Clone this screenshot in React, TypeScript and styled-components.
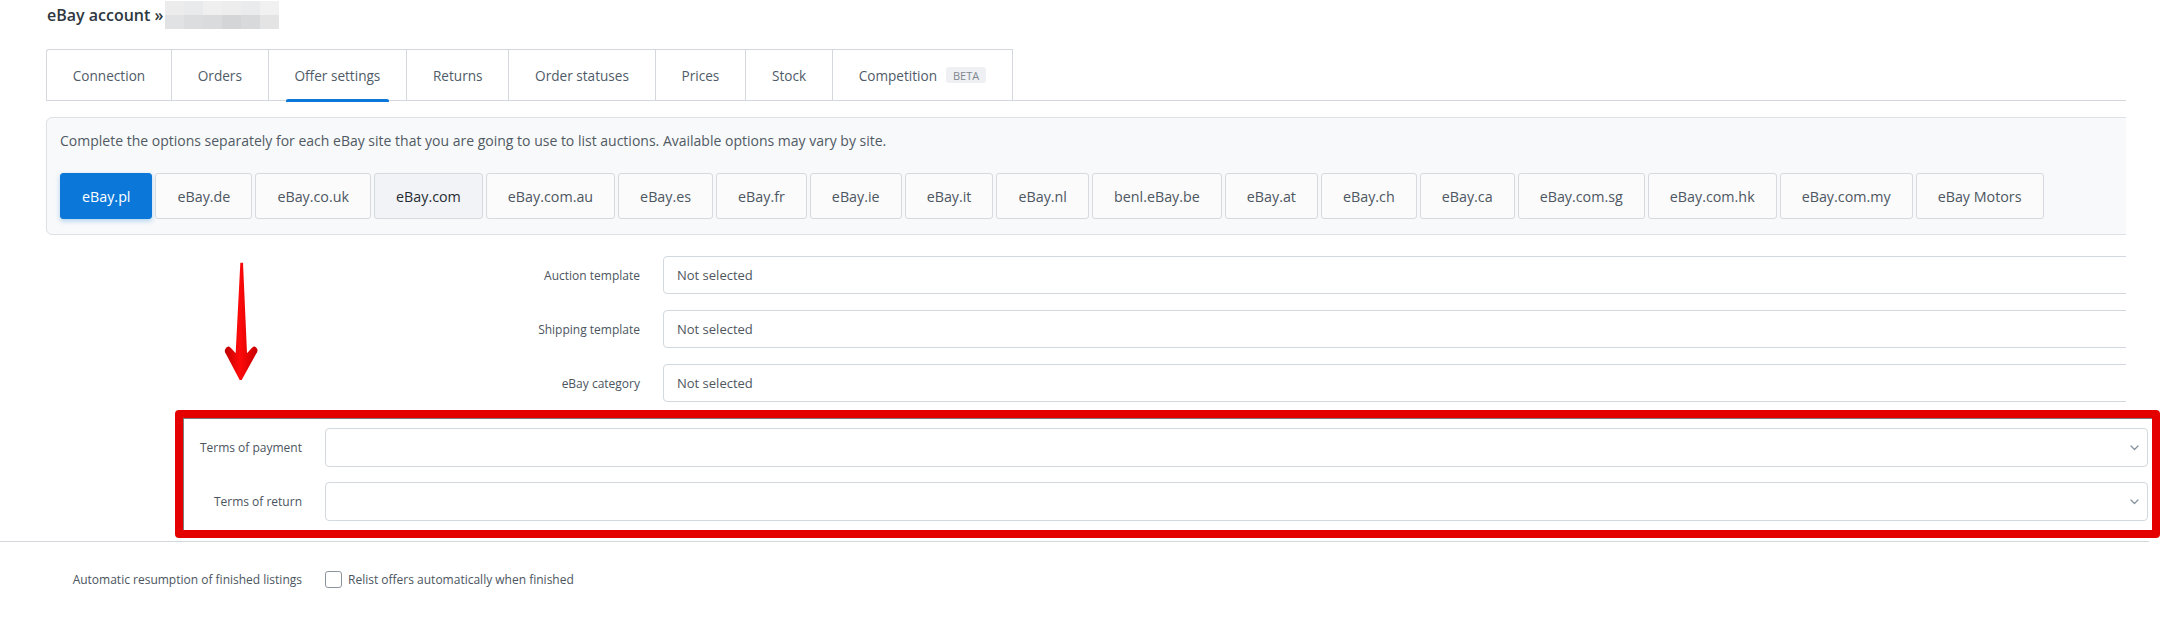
import React from "react";
import styled, { createGlobalStyle } from "styled-components";

const GlobalStyle = createGlobalStyle`
  html, body {
    margin: 0;
    padding: 0;
    background: #ffffff;
  }
  body {
    font-family: "Open Sans", "Liberation Sans", sans-serif;
    color: #4b5560;
  }
`;

const tabs = [
  "Connection",
  "Orders",
  "Offer settings",
  "Returns",
  "Order statuses",
  "Prices",
  "Stock",
  "Competition",
];

const sites = [
  "eBay.pl",
  "eBay.de",
  "eBay.co.uk",
  "eBay.com",
  "eBay.com.au",
  "eBay.es",
  "eBay.fr",
  "eBay.ie",
  "eBay.it",
  "eBay.nl",
  "benl.eBay.be",
  "eBay.at",
  "eBay.ch",
  "eBay.ca",
  "eBay.com.sg",
  "eBay.com.hk",
  "eBay.com.my",
  "eBay Motors",
];

// pixelated, blurred account name
const blurCells = [
  "#ececed", "#e9eaeb", "#efefef", "#ededee", "#eaebec", "#f1f1f1",
  "#e1e2e3", "#dcdddf", "#dadbdd", "#d4d5d7", "#d8d9da", "#e4e4e5",
];

export default function App() {
  return (
    <>
      <GlobalStyle />
      <Page>
        <Upper>
          <Header>
            <Title>eBay account »</Title>
            <Blur>
              {blurCells.map((c, i) => (
                <BlurCell key={i} $c={c} />
              ))}
            </Blur>
          </Header>

          <TabRow>
            {tabs.map((t) => (
              <Tab key={t} $active={t === "Offer settings"}>
                {t}
                {t === "Competition" && <Badge>BETA</Badge>}
              </Tab>
            ))}
          </TabRow>

          <Panel>
            <Info>
              Complete the options separately for each eBay site that you are
              going to use to list auctions. Available options may vary by site.
            </Info>
            <SiteRow>
              {sites.map((s) => (
                <SiteButton
                  key={s}
                  $active={s === "eBay.pl"}
                  $hover={s === "eBay.com"}
                >
                  {s}
                </SiteButton>
              ))}
            </SiteRow>
          </Panel>

          <Form>
            <Label>Auction template</Label>
            <Field>Not selected</Field>
            <Label>Shipping template</Label>
            <Field>Not selected</Field>
            <Label>eBay category</Label>
            <Field>Not selected</Field>
          </Form>
        </Upper>

        <RedBox>
          <Label>Terms of payment</Label>
          <Select>
            <Chevron />
          </Select>
          <Label>Terms of return</Label>
          <Select>
            <Chevron />
          </Select>
        </RedBox>

        <Divider />

        <CheckRow>
          <Label>Automatic resumption of finished listings</Label>
          <CheckLabel>
            <Box />
            Relist offers automatically when finished
          </CheckLabel>
        </CheckRow>

        <Arrow />
      </Page>
    </>
  );
}

function Chevron() {
  return (
    <svg width="9" height="6" viewBox="0 0 9 6">
      <path
        d="M1 1l3.5 3.5L8 1"
        fill="none"
        stroke="#8693a0"
        strokeWidth="1.3"
        strokeLinecap="round"
        strokeLinejoin="round"
      />
    </svg>
  );
}

function Arrow() {
  return (
    <ArrowWrap>
      <svg width="100" height="140" viewBox="0 0 300 420">
        <defs>
          <linearGradient id="arrowFill" x1="0" x2="1" y1="0" y2="0">
            <stop offset="0" stopColor="#c00000" />
            <stop offset="0.45" stopColor="#ff0a0a" />
            <stop offset="1" stopColor="#c80000" />
          </linearGradient>
        </defs>
        <path
          d="M121 38 L129 38 L141 310 L156 293 Q166 284 172 298 Q174 305 168 312 L125 390 L119 390 L78 312 Q72 305 76 297 Q82 284 92 293 L107 310 Z"
          fill="url(#arrowFill)"
        />
      </svg>
    </ArrowWrap>
  );
}

const Page = styled.div`
  position: relative;
  width: 2166px;
  height: 631px;
  overflow: hidden;
`;

const Upper = styled.div`
  padding-left: 46px;
  margin-right: 40px;
  overflow: hidden;
`;

const Header = styled.div`
  display: flex;
  align-items: center;
  height: 28px;
  padding-top: 1px;
  gap: 2px;
`;

const Title = styled.h1`
  margin: 0 0 0 1px;
  font-size: 16px;
  line-height: 28px;
  font-weight: 600;
  color: #2f3740;
`;

const Blur = styled.div`
  display: grid;
  grid-template-columns: repeat(6, 19px);
  grid-template-rows: 14px 14px;
  filter: blur(0.6px);
`;

const BlurCell = styled.div<{ $c: string }>`
  background: ${(p) => p.$c};
`;

const TabRow = styled.div`
  display: flex;
  margin-top: 20px;
  border-bottom: 1px solid #d4d8dd;
`;

const Tab = styled.div<{ $active?: boolean }>`
  position: relative;
  display: flex;
  align-items: center;
  height: 50px;
  padding: 0 25.8px;
  border-top: 1px solid #d4d8dd;
  border-left: 1px solid #d4d8dd;
  font-size: 13.6px;
  color: #4f5b68;
  white-space: nowrap;

  &:first-child {
    border-top-left-radius: 3px;
  }
  &:last-child {
    border-right: 1px solid #d4d8dd;
  }

  ${(p) =>
    p.$active &&
    `
    &::after {
      content: "";
      position: absolute;
      left: 17px;
      right: 17px;
      bottom: -2px;
      height: 3px;
      border-radius: 2px 2px 0 0;
      background: #0b78d9;
    }
  `}
`;

const Badge = styled.span`
  display: inline-flex;
  align-items: center;
  height: 16px;
  margin-left: 9px;
  padding: 0 7px;
  border-radius: 3px;
  background: #eef0f3;
  color: #80868e;
  font-size: 11px;
`;

const Panel = styled.div`
  margin-top: 16px;
  margin-right: -8px;
  padding: 13px 0 15px 13px;
  border: 1px solid #dde1e5;
  border-radius: 6px;
  background: #f8f9fa;
`;

const Info = styled.p`
  margin: 0;
  font-size: 14px;
  line-height: 20px;
  color: #505a64;
`;

const SiteRow = styled.div`
  display: flex;
  gap: 3px;
  margin-top: 22px;
`;

const SiteButton = styled.div<{ $active?: boolean; $hover?: boolean }>`
  display: flex;
  align-items: center;
  height: 46px;
  box-sizing: border-box;
  padding: 0 21px;
  border: 1px solid ${(p) => (p.$active ? "#0b78d9" : "#d6dade")};
  border-radius: 3px;
  background: ${(p) => (p.$active ? "#0b78d9" : p.$hover ? "#f1f3f6" : "#fbfbfc")};
  color: ${(p) => (p.$active ? "#ffffff" : p.$hover ? "#262b31" : "#4d5761")};
  box-shadow: ${(p) => (p.$active ? "0 2px 5px rgba(11, 120, 217, 0.3)" : "none")};
  font-size: 14.3px;
  white-space: nowrap;
`;

const Form = styled.div`
  display: grid;
  grid-template-columns: 594px 1fr;
  column-gap: 23px;
  row-gap: 16px;
  margin-top: 21px;
  margin-right: -8px;
`;

const Label = styled.div`
  align-self: center;
  text-align: right;
  font-size: 12px;
  color: #4b5560;
  white-space: nowrap;
`;

const Field = styled.div`
  display: flex;
  align-items: center;
  height: 38px;
  box-sizing: border-box;
  padding: 0 13px;
  border: 1px solid #d3d9df;
  border-radius: 4px;
  background: #ffffff;
  font-size: 13px;
  color: #4f565e;
`;

const RedBox = styled.div`
  display: grid;
  grid-template-columns: 119px 1fr;
  column-gap: 23px;
  row-gap: 15px;
  margin: 8px 6px 0 175px;
  padding: 10px 4px 9px 0;
  border: 8px solid #e50000;
  border-radius: 4px;
  box-shadow: inset 1px 1px 0 rgba(70, 70, 70, 0.7);
`;

const Select = styled.div`
  display: flex;
  align-items: center;
  justify-content: flex-end;
  height: 39px;
  box-sizing: border-box;
  padding-right: 8px;
  border: 1px solid #d3d9df;
  border-radius: 4px;
  background: #ffffff;
`;

const Divider = styled.div`
  height: 1px;
  margin: 3px 17px 0 0;
  background: #d5d9dd;
`;

const CheckRow = styled.div`
  display: grid;
  grid-template-columns: 302px 1fr;
  column-gap: 23px;
  align-items: center;
  margin-top: 29px;
`;

const CheckLabel = styled.label`
  display: flex;
  align-items: center;
  gap: 6px;
  font-size: 12px;
  color: #4b5560;
`;

const Box = styled.span`
  width: 17px;
  height: 17px;
  box-sizing: border-box;
  border: 1px solid #8b949d;
  border-radius: 3px;
  background: #ffffff;
`;

const ArrowWrap = styled.div`
  position: absolute;
  left: 200px;
  top: 250px;
  width: 100px;
  height: 140px;
`;
